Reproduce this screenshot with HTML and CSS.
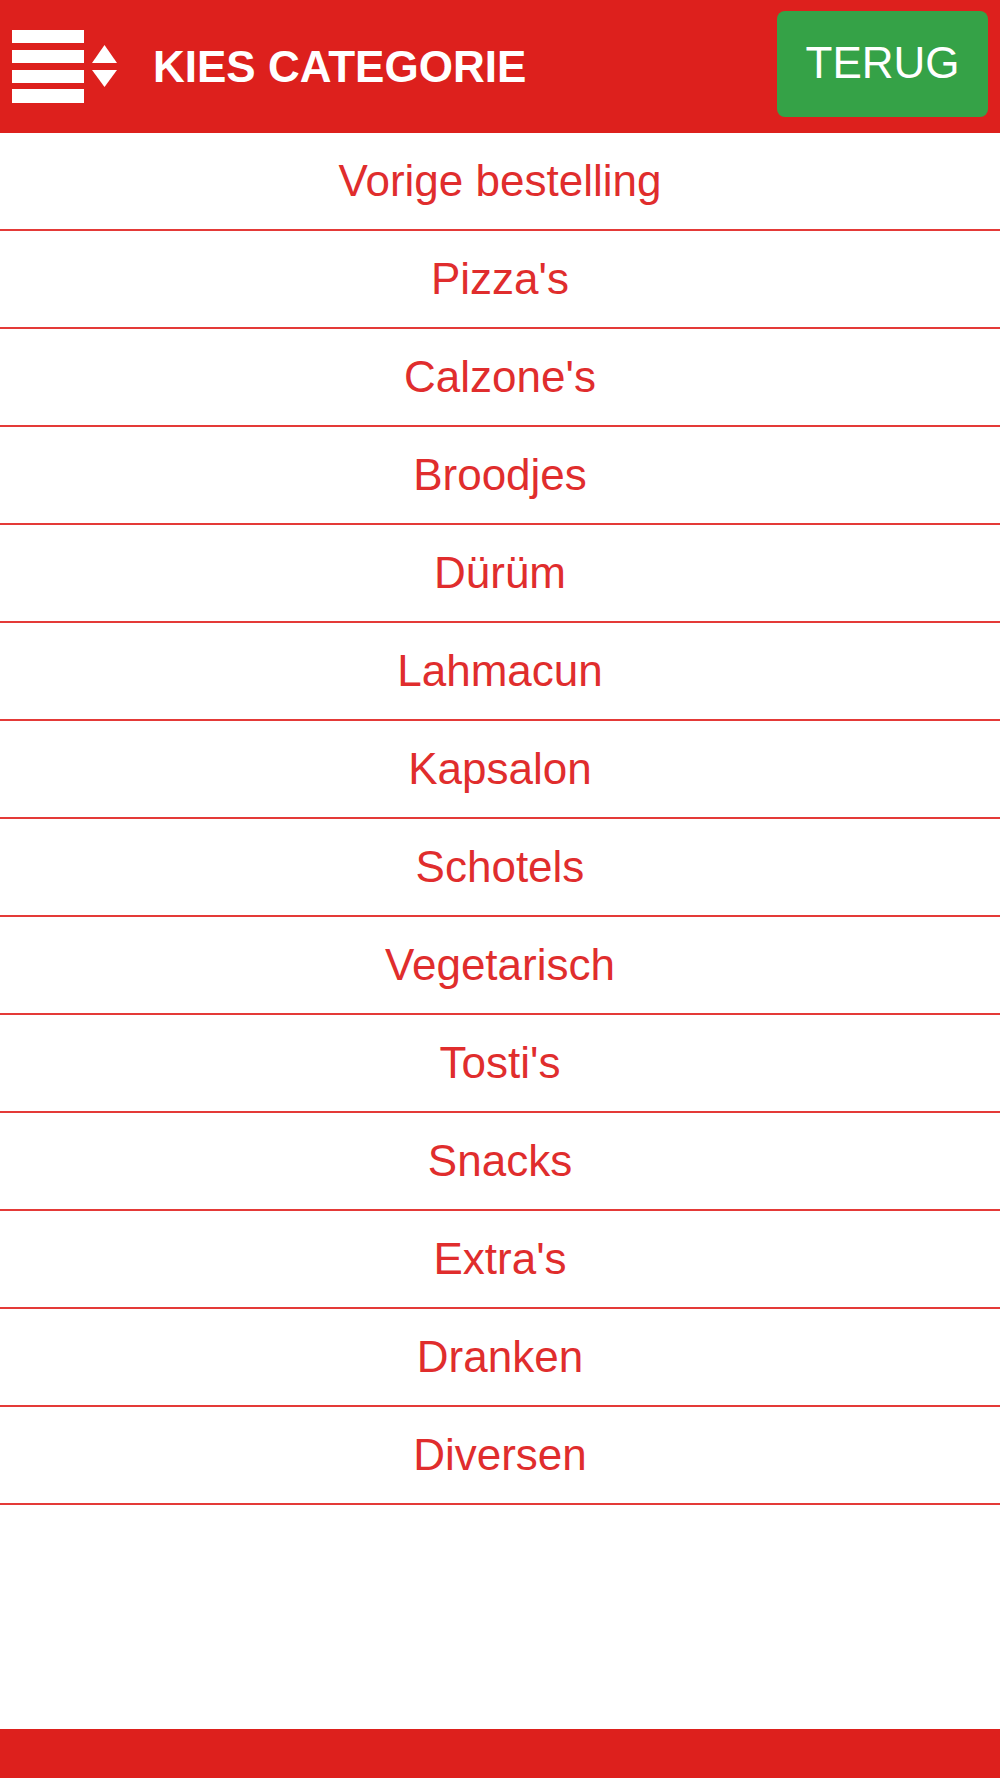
FILE: index.html
```html
<!DOCTYPE html>
<html lang="nl">
<head>
<meta charset="utf-8">
<title>Kies categorie</title>
<link rel="stylesheet" href="styles.css">
</head>
<body>
<div class="page">
  <header class="topbar">
    <svg class="menu-icon" width="106" height="74" viewBox="0 0 106 74" aria-hidden="true">
      <rect x="0" y="0" width="72" height="13" fill="#fff"/>
      <rect x="0" y="20" width="72" height="13" fill="#fff"/>
      <rect x="0" y="40" width="72" height="13" fill="#fff"/>
      <rect x="0" y="59" width="72" height="14" fill="#fff"/>
      <polygon points="92.5,15 105,33 80,33" fill="#fff"/>
      <polygon points="80,40 105,40 92.5,57" fill="#fff"/>
    </svg>
    <h1 class="title">KIES CATEGORIE</h1>
    <a class="back-btn" href="#">TERUG</a>
  </header>
  <ul class="cat-list">
    <li class="cat-item">Vorige bestelling</li>
    <li class="cat-item">Pizza's</li>
    <li class="cat-item">Calzone's</li>
    <li class="cat-item">Broodjes</li>
    <li class="cat-item">Dürüm</li>
    <li class="cat-item">Lahmacun</li>
    <li class="cat-item">Kapsalon</li>
    <li class="cat-item">Schotels</li>
    <li class="cat-item">Vegetarisch</li>
    <li class="cat-item">Tosti's</li>
    <li class="cat-item">Snacks</li>
    <li class="cat-item">Extra's</li>
    <li class="cat-item">Dranken</li>
    <li class="cat-item">Diversen</li>
  </ul>
  <footer class="bottombar"></footer>
</div>
</body>
</html>
```

FILE: styles.css
```css
html, body {
  margin: 0;
  padding: 0;
  background: #ffffff;
  font-family: "Liberation Sans", Arial, sans-serif;
}

.page {
  display: flex;
  flex-direction: column;
  min-height: 100vh;
}

.topbar {
  height: 133px;
  background: #dd201d;
  display: flex;
  align-items: center;
  flex-shrink: 0;
}

.menu-icon {
  margin-left: 12px;
  flex-shrink: 0;
}

.title {
  margin: 0 0 0 35px;
  font-size: 44px;
  font-weight: bold;
  color: #ffffff;
  line-height: 1;
  flex: 1;
}

.back-btn {
  align-self: flex-start;
  margin-top: 11px;
  margin-right: 12px;
  width: 211px;
  height: 106px;
  line-height: 104px;
  text-align: center;
  background: #35a247;
  color: #ffffff;
  font-size: 44px;
  text-decoration: none;
  border-radius: 8px;
}

.cat-list {
  list-style: none;
  margin: 0;
  padding: 0;
}

.cat-item {
  height: 96px;
  line-height: 96px;
  text-align: center;
  font-size: 44px;
  color: #e02d2d;
  border-bottom: 2px solid #e43a38;
}

.bottombar {
  margin-top: auto;
  height: 49px;
  background: #dd201d;
  flex-shrink: 0;
}
```
